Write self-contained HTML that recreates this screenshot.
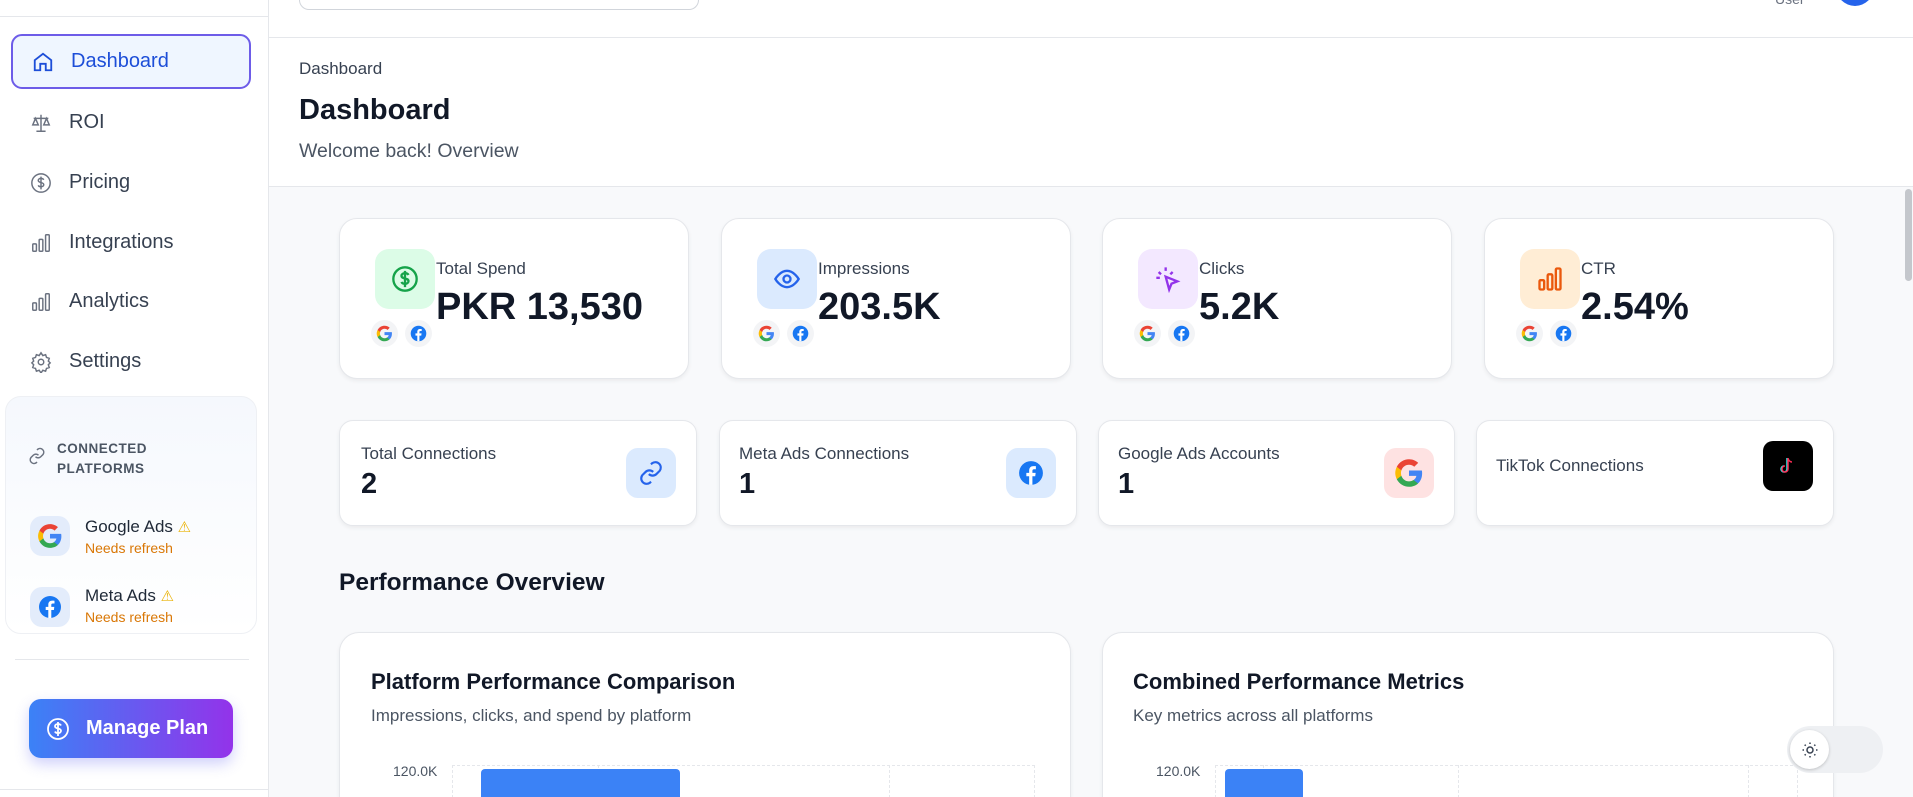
<!DOCTYPE html>
<html style="width:1913px;height:797px;overflow:hidden"><head><meta charset="utf-8"><style>
*{box-sizing:border-box;margin:0;padding:0}
body{width:1913px;height:797px;overflow:hidden;font-family:"Liberation Sans",sans-serif;background:#f8f9fb;position:relative;color:#111827}
.abs{position:absolute}
.side{left:0;top:0;width:269px;height:797px;background:#fff;border-right:1px solid #e5e7eb}
.nav{position:absolute;left:11px;width:240px;height:55px;display:flex;align-items:center;padding-left:19px;font-size:20px;color:#374151}
.nav svg{margin-right:17px}
.nav.act{top:34px;background:#eff6ff;border:2px solid #6d5ce8;border-radius:11px;color:#1d4ed8}
.card{position:absolute;background:#fff;border:1px solid #e5e7eb;border-radius:18px;box-shadow:0 2px 4px rgba(0,0,0,.06);overflow:hidden}
.lab{font-size:17px;color:#374151;position:absolute}
.val{font-weight:bold;position:absolute;color:#111827}
.mini{position:absolute;width:27px;height:27px;border-radius:50%;background:#f3f4f6;display:flex;align-items:center;justify-content:center}
.clip{position:absolute;left:0;top:0;width:1913px;height:797px;overflow:hidden}
.ch{border-bottom:none;border-radius:20px 20px 0 0}
</style></head><body><div class="clip">
<svg width="0" height="0" style="position:absolute"><defs>
<g id="gg"><path fill="#4285F4" d="M45 24.5c0-1.6-.1-3.1-.4-4.5H24v8.5h11.8c-.5 2.7-2.1 5-4.4 6.6v5.5h7.1c4.2-3.8 6.5-9.5 6.5-16.1z"/><path fill="#34A853" d="M24 46c5.9 0 10.9-2 14.5-5.3l-7.1-5.5c-2 1.3-4.5 2.1-7.4 2.1-5.7 0-10.5-3.8-12.2-9H4.5v5.7C8.1 41.1 15.5 46 24 46z"/><path fill="#FBBC05" d="M11.8 28.3c-.4-1.3-.7-2.8-.7-4.3s.3-3 .7-4.3V14H4.5C3 17 2 20.4 2 24s1 7 2.5 10z"/><path fill="#EA4335" d="M24 10.7c3.2 0 6.1 1.1 8.4 3.3l6.3-6.3C34.9 4.2 29.9 2 24 2 15.5 2 8.1 6.9 4.5 14l7.3 5.7c1.7-5.2 6.5-9 12.2-9z"/></g>
<g id="fb"><circle cx="12" cy="12" r="11" fill="#1877F2"/><path fill="#fff" d="M13.3 23v-8h2.6l.4-3.1h-3V10c0-.9.3-1.5 1.6-1.5h1.6V5.7c-.3 0-1.2-.1-2.3-.1-2.3 0-3.9 1.4-3.9 4v2.3H7.7V15h2.6v8z"/></g>
</defs></svg>
<!-- sidebar -->
<div class="abs side">
 <div class="abs" style="left:0;top:16px;width:268px;border-top:1px solid #e5e7eb"></div>
 <div class="nav act"><svg width="22" height="22" viewBox="0 0 24 24" fill="none" stroke="#1d4ed8" stroke-width="2"><path d="M3 10l9-7 9 7v11h-6v-7H9v7H3z"/></svg>Dashboard</div>
 <div class="nav" style="top:95px"><svg width="22" height="22" viewBox="0 0 24 24" fill="none" stroke="#6b7280" stroke-width="1.6"><path d="M12 3v18M7 21h10M4 7h16M6 7l-3 7h6zM18 7l-3 7h6z"/></svg>ROI</div>
 <div class="nav" style="top:155px"><svg width="22" height="22" viewBox="0 0 24 24" fill="none" stroke="#6b7280" stroke-width="1.6"><circle cx="12" cy="12" r="10"/><path d="M15 8.5c-.5-1-1.7-1.5-3-1.5-1.7 0-3 .9-3 2.3 0 3 6 1.5 6 4.5 0 1.4-1.3 2.3-3 2.3-1.4 0-2.6-.6-3-1.6M12 5v14"/></svg>Pricing</div>
 <div class="nav" style="top:215px"><svg width="22" height="22" viewBox="0 0 24 24" fill="none" stroke="#6b7280" stroke-width="1.6"><rect x="3" y="13" width="4" height="8" rx="1"/><rect x="10" y="8" width="4" height="13" rx="1"/><rect x="17" y="3" width="4" height="18" rx="1"/></svg>Integrations</div>
 <div class="nav" style="top:274px"><svg width="22" height="22" viewBox="0 0 24 24" fill="none" stroke="#6b7280" stroke-width="1.6"><rect x="3" y="13" width="4" height="8" rx="1"/><rect x="10" y="8" width="4" height="13" rx="1"/><rect x="17" y="3" width="4" height="18" rx="1"/></svg>Analytics</div>
 <div class="nav" style="top:334px"><svg width="22" height="22" viewBox="0 0 24 24" fill="none" stroke="#6b7280" stroke-width="1.6"><circle cx="12" cy="12" r="3"/><path d="M12 2l2 3 3-1 1 3 3 1-1 3 2 2-2 2 1 3-3 1-1 3-3-1-2 3-2-3-3 1-1-3-3-1 1-3-2-2 2-2-1-3 3-1 1-3 3 1z"/></svg>Settings</div>
 <div class="abs" style="left:5px;top:396px;width:252px;height:238px;border:1px solid #eef0f4;border-radius:16px;background:linear-gradient(#f5f8fd,#fff)">
  <svg class="abs" style="left:22px;top:50px" width="18" height="18" viewBox="0 0 24 24" fill="none" stroke="#6b7280" stroke-width="2"><path d="M10 13a5 5 0 0 0 7 0l3-3a5 5 0 0 0-7-7l-1 1M14 11a5 5 0 0 0-7 0l-3 3a5 5 0 0 0 7 7l1-1"/></svg>
  <div class="abs" style="left:51px;top:42px;font-size:13.5px;font-weight:bold;color:#4b5563;line-height:20px;letter-spacing:.5px">CONNECTED<br>PLATFORMS</div>
  <div class="abs" style="left:24px;top:119px;width:40px;height:40px;border-radius:12px;background:#e3ecfb;display:flex;align-items:center;justify-content:center"><svg width="26" height="26" viewBox="0 0 48 48"><use href="#gg"/></svg></div>
  <div class="abs" style="left:79px;top:120px;font-size:17px;color:#1f2937">Google Ads <span style="color:#eab308;font-size:15px">⚠</span></div>
  <div class="abs" style="left:79px;top:143px;font-size:14px;color:#d97706">Needs refresh</div>
  <div class="abs" style="left:24px;top:190px;width:40px;height:40px;border-radius:12px;background:#e3ecfb;display:flex;align-items:center;justify-content:center"><svg width="24" height="24" viewBox="0 0 24 24"><use href="#fb"/></svg></div>
  <div class="abs" style="left:79px;top:189px;font-size:17px;color:#1f2937">Meta Ads <span style="color:#eab308;font-size:15px">⚠</span></div>
  <div class="abs" style="left:79px;top:212px;font-size:14px;color:#d97706">Needs refresh</div>
 </div>
 <div class="abs" style="left:15px;top:659px;width:234px;border-top:1px solid #e5e7eb"></div>
 <div class="abs" style="left:29px;top:699px;width:204px;height:59px;border-radius:12px;background:linear-gradient(90deg,#3b82f6,#9333ea);box-shadow:0 6px 14px rgba(99,102,241,.3);display:flex;align-items:center;padding-left:17px;color:#fff;font-size:20px;font-weight:bold"><svg width="24" height="24" viewBox="0 0 24 24" fill="none" stroke="#fff" stroke-width="1.8" style="margin-right:16px"><circle cx="12" cy="12" r="10"/><path d="M15 8.5c-.5-1-1.7-1.5-3-1.5-1.7 0-3 .9-3 2.3 0 3 6 1.5 6 4.5 0 1.4-1.3 2.3-3 2.3-1.4 0-2.6-.6-3-1.6M12 5v14"/></svg>Manage Plan</div>
 <div class="abs" style="left:0;top:789px;width:268px;border-top:1px solid #e5e7eb"></div>
</div>
<!-- header -->
<div class="abs" style="left:269px;top:0;width:1644px;height:187px;background:#fff;border-bottom:1px solid #e5e7eb"></div>
<div class="abs" style="left:269px;top:37px;width:1644px;border-top:1px solid #e5e7eb"></div>
<div class="abs" style="left:299px;top:0;width:400px;height:10px;border:1px solid #d1d5db;border-top:none;border-radius:0 0 14px 14px;background:#fff"></div>
<div class="abs" style="left:1775px;top:-9px;font-size:14px;color:#6b7280">User</div>
<div class="abs" style="left:1836px;top:-32px;width:38px;height:38px;border-radius:50%;background:#2563eb"></div>
<div class="abs" style="left:299px;top:59px;font-size:17px;color:#374151">Dashboard</div>
<div class="abs" style="left:299px;top:94px;font-size:29px;font-weight:bold;color:#111827">Dashboard</div>
<div class="abs" style="left:299px;top:140px;font-size:19.5px;color:#4b5563">Welcome back! Overview</div>
<div class="abs" style="left:1905px;top:189px;width:7px;height:92px;border-radius:4px;background:#c4c7cc"></div>

<!-- stat cards -->
<div class="card" style="left:339px;top:218px;width:350px;height:161px">
 <div class="abs" style="left:35px;top:30px;width:60px;height:60px;border-radius:14px;background:#dcfce7;display:flex;align-items:center;justify-content:center"><svg width="28" height="28" viewBox="0 0 24 24" fill="none" stroke="#16a34a" stroke-width="2"><circle cx="12" cy="12" r="10"/><path d="M15 8.5c-.5-1-1.7-1.5-3-1.5-1.7 0-3 .9-3 2.3 0 3 6 1.5 6 4.5 0 1.4-1.3 2.3-3 2.3-1.4 0-2.6-.6-3-1.6M12 5v14"/></svg></div>
 <div class="lab" style="left:96px;top:40px">Total Spend</div><div class="val" style="left:96px;top:67px;font-size:38px">PKR 13,530</div>
 <div class="mini" style="left:31px;top:101px"><svg width="17" height="17" viewBox="0 0 48 48"><use href="#gg"/></svg></div>
 <div class="mini" style="left:65px;top:101px"><svg width="17" height="17" viewBox="0 0 24 24"><use href="#fb"/></svg></div>
</div>
<div class="card" style="left:721px;top:218px;width:350px;height:161px">
 <div class="abs" style="left:35px;top:30px;width:60px;height:60px;border-radius:14px;background:#dbeafe;display:flex;align-items:center;justify-content:center"><svg width="28" height="28" viewBox="0 0 24 24" fill="none" stroke="#2563eb" stroke-width="2"><path d="M2 12s4-7 10-7 10 7 10 7-4 7-10 7S2 12 2 12z"/><circle cx="12" cy="12" r="3"/></svg></div>
 <div class="lab" style="left:96px;top:40px">Impressions</div><div class="val" style="left:96px;top:67px;font-size:38px">203.5K</div>
 <div class="mini" style="left:31px;top:101px"><svg width="17" height="17" viewBox="0 0 48 48"><use href="#gg"/></svg></div>
 <div class="mini" style="left:65px;top:101px"><svg width="17" height="17" viewBox="0 0 24 24"><use href="#fb"/></svg></div>
</div>
<div class="card" style="left:1102px;top:218px;width:350px;height:161px">
 <div class="abs" style="left:35px;top:30px;width:60px;height:60px;border-radius:14px;background:#f3e8ff;display:flex;align-items:center;justify-content:center"><svg width="28" height="28" viewBox="0 0 24 24" fill="none" stroke="#9333ea" stroke-width="2"><path d="M10 2v3M4 6l2 2M2 11h3M16 6l-2 2M10 10l3 11 2-5 5-2z"/></svg></div>
 <div class="lab" style="left:96px;top:40px">Clicks</div><div class="val" style="left:96px;top:67px;font-size:38px">5.2K</div>
 <div class="mini" style="left:31px;top:101px"><svg width="17" height="17" viewBox="0 0 48 48"><use href="#gg"/></svg></div>
 <div class="mini" style="left:65px;top:101px"><svg width="17" height="17" viewBox="0 0 24 24"><use href="#fb"/></svg></div>
</div>
<div class="card" style="left:1484px;top:218px;width:350px;height:161px">
 <div class="abs" style="left:35px;top:30px;width:60px;height:60px;border-radius:14px;background:#ffedd5;display:flex;align-items:center;justify-content:center"><svg width="28" height="28" viewBox="0 0 24 24" fill="none" stroke="#ea580c" stroke-width="2"><rect x="3" y="13" width="4" height="8" rx="1"/><rect x="10" y="8" width="4" height="13" rx="1"/><rect x="17" y="3" width="4" height="18" rx="1"/></svg></div>
 <div class="lab" style="left:96px;top:40px">CTR</div><div class="val" style="left:96px;top:67px;font-size:38px">2.54%</div>
 <div class="mini" style="left:31px;top:101px"><svg width="17" height="17" viewBox="0 0 48 48"><use href="#gg"/></svg></div>
 <div class="mini" style="left:65px;top:101px"><svg width="17" height="17" viewBox="0 0 24 24"><use href="#fb"/></svg></div>
</div>

<!-- connection cards -->
<div class="card" style="left:339px;top:420px;width:358px;height:106px;border-radius:14px">
 <div class="lab" style="left:21px;top:23px">Total Connections</div><div class="val" style="left:21px;top:47px;font-size:29px">2</div>
 <div class="abs" style="right:20px;top:27px;width:50px;height:50px;border-radius:12px;background:#dbeafe;display:flex;align-items:center;justify-content:center"><svg width="26" height="26" viewBox="0 0 24 24" fill="none" stroke="#2563eb" stroke-width="2"><path d="M10 13a5 5 0 0 0 7 0l3-3a5 5 0 0 0-7-7l-1 1M14 11a5 5 0 0 0-7 0l-3 3a5 5 0 0 0 7 7l1-1"/></svg></div>
</div>
<div class="card" style="left:719px;top:420px;width:358px;height:106px;border-radius:14px">
 <div class="lab" style="left:19px;top:23px">Meta Ads Connections</div><div class="val" style="left:19px;top:47px;font-size:29px">1</div>
 <div class="abs" style="right:20px;top:27px;width:50px;height:50px;border-radius:12px;background:#dbeafe;display:flex;align-items:center;justify-content:center"><svg width="26" height="26" viewBox="0 0 24 24"><use href="#fb"/></svg></div>
</div>
<div class="card" style="left:1098px;top:420px;width:357px;height:106px;border-radius:14px">
 <div class="lab" style="left:19px;top:23px">Google Ads Accounts</div><div class="val" style="left:19px;top:47px;font-size:29px">1</div>
 <div class="abs" style="right:20px;top:27px;width:50px;height:50px;border-radius:12px;background:#fee2e2;display:flex;align-items:center;justify-content:center"><svg width="30" height="30" viewBox="0 0 48 48"><use href="#gg"/></svg></div>
</div>
<div class="card" style="left:1476px;top:420px;width:358px;height:106px;border-radius:14px">
 <div class="lab" style="left:19px;top:35px">TikTok Connections</div>
 <div class="abs" style="right:20px;top:20px;width:50px;height:50px;border-radius:10px;background:#000;display:flex;align-items:center;justify-content:center"><svg width="24" height="24" viewBox="0 0 24 24" fill="none" stroke-width="1.5"><path stroke="#25f4ee" d="M11 4v11a3 3 0 1 1-3-3"/><path stroke="#fe2c55" d="M12 4v11a3 3 0 1 1-3-3M12 4c0 2 2 4 4 4"/></svg></div>
</div>

<div class="abs" style="left:339px;top:569px;font-size:24.5px;font-weight:bold;color:#111827">Performance Overview</div>

<!-- chart cards -->
<div class="card ch" style="left:339px;top:632px;width:732px;height:165px">
 <div class="abs" style="left:31px;top:36px;font-size:22px;font-weight:bold">Platform Performance Comparison</div>
 <div class="abs" style="left:31px;top:73px;font-size:17px;color:#4b5563">Impressions, clicks, and spend by platform</div>
 <div class="abs" style="left:53px;top:130px;font-size:14px;color:#4b5563">120.0K</div>
 <div class="abs" style="left:112px;top:132px;width:583px;height:33px;border:1px dashed #e5e7eb;border-bottom:none"></div>
 <div class="abs" style="left:258px;top:132px;height:33px;border-left:1px dashed #e5e7eb"></div>
 <div class="abs" style="left:549px;top:132px;height:33px;border-left:1px dashed #e5e7eb"></div>
 <div class="abs" style="left:141px;top:136px;width:199px;height:29px;background:#3b82f6;border-radius:4px 4px 0 0"></div>
</div>
<div class="card ch" style="left:1102px;top:632px;width:732px;height:165px">
 <div class="abs" style="left:30px;top:36px;font-size:22px;font-weight:bold">Combined Performance Metrics</div>
 <div class="abs" style="left:30px;top:73px;font-size:17px;color:#4b5563">Key metrics across all platforms</div>
 <div class="abs" style="left:53px;top:130px;font-size:14px;color:#4b5563">120.0K</div>
 <div class="abs" style="left:112px;top:132px;width:583px;height:33px;border:1px dashed #e5e7eb;border-bottom:none"></div>
 <div class="abs" style="left:160px;top:132px;height:33px;border-left:1px dashed #e5e7eb"></div>
 <div class="abs" style="left:355px;top:132px;height:33px;border-left:1px dashed #e5e7eb"></div>
 <div class="abs" style="left:645px;top:132px;height:33px;border-left:1px dashed #e5e7eb"></div>
 <div class="abs" style="left:122px;top:136px;width:78px;height:29px;background:#3b82f6;border-radius:4px 4px 0 0"></div>
</div>

<div class="abs" style="left:1787px;top:726px;width:96px;height:47px;border-radius:24px;background:#eef0f3">
 <div class="abs" style="left:3px;top:4px;width:39px;height:39px;border-radius:50%;background:#fff;box-shadow:0 1px 3px rgba(0,0,0,.2);display:flex;align-items:center;justify-content:center"><svg width="18" height="18" viewBox="0 0 24 24" fill="none" stroke="#374151" stroke-width="2"><circle cx="12" cy="12" r="4"/><path d="M12 2v2M12 20v2M2 12h2M20 12h2M4.9 4.9l1.4 1.4M17.7 17.7l1.4 1.4M4.9 19.1l1.4-1.4M17.7 6.3l1.4-1.4"/></svg></div>
</div>
</div></body></html>
